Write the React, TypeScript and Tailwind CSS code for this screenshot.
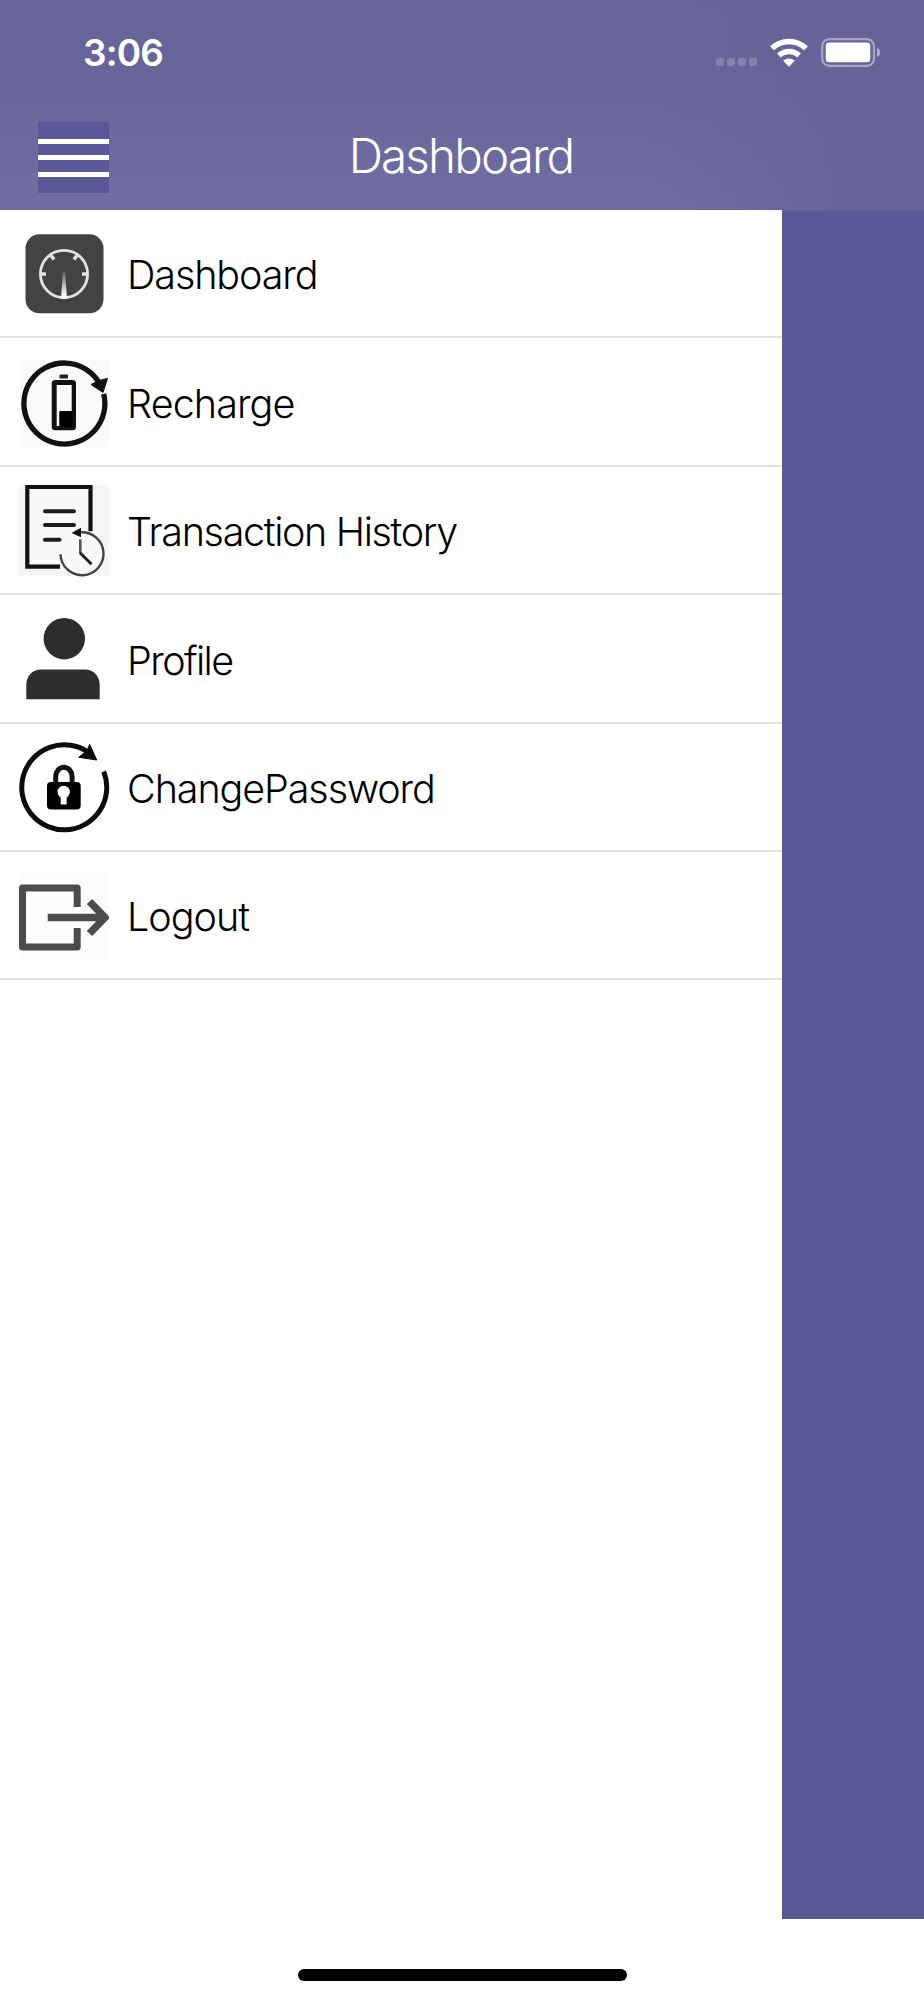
import React from 'react';

interface IconProps {
  className?: string;
}

const DashboardIcon: React.FC<IconProps> = ({ className }) => (
  <svg className={className} viewBox="0 0 90 90" fill="none">
    <defs>
      <linearGradient id="needle" x1="0" y1="41" x2="0" y2="66" gradientUnits="userSpaceOnUse">
        <stop stopColor="#fff" stopOpacity="0.1" />
        <stop offset="1" stopColor="#fff" />
      </linearGradient>
    </defs>
    <rect x="6.5" y="5.3" width="78" height="79" rx="14" fill="#434343" />
    <circle cx="45" cy="45" r="23.6" stroke="#e4e4e4" strokeWidth="2.8" />
    <path d="M22 45h5M63 45h5M32 26.5l3 4M58 26.5l-3 4" stroke="#e4e4e4" strokeWidth="3.5" />
    <path d="M44 43h2l2 26.5h-6z" fill="url(#needle)" />
  </svg>
);

const RechargeIcon: React.FC<IconProps> = ({ className }) => (
  <svg className={className} viewBox="0 1 90 90" fill="none">
    <rect x="1" y="2" width="89" height="88" fill="#fafafa" />
    <path d="M84.7 36.8A40.5 40.5 0 1 1 80 25.5" stroke="#111" strokeWidth="5.3" />
    <path d="M72 27.5l8-4 8.500-2-4.500 14z" fill="#111" stroke="#111" strokeWidth="1" />
    <rect x="40.5" y="17.5" width="8.5" height="4" rx="1" fill="#222" />
    <rect x="32.7" y="23" width="24.3" height="50.3" rx="3.5" fill="#111" />
    <path d="M37.7 28h15v26H40.8v15h-3.1z" fill="#fafafa" />
    <path d="M40.3 54.5h13V70h-13z" fill="#000" />
  </svg>
);

const HistoryIcon: React.FC<IconProps> = ({ className }) => (
  <svg className={className} viewBox="0 0.7 90 90" fill="none" overflow="visible">
    <rect y="-0.5" width="90" height="91" fill="#f5f5f5" />
    <path d="M41 81.4H8.3V1.7h63.2V46" fill="#f9f9f9" />
    <path d="M41 81.4H8.3V1.7h63.2V46" stroke="#111" strokeWidth="4.2" />
    <path d="M26 26h29M26 39.7h29M26 54.4h14.5" stroke="#1c1c1c" strokeWidth="4" strokeLinecap="round" />
    <circle cx="63" cy="68" r="21.5" fill="#f9f9f9" />
    <path d="M61 47A21.5 21.5 0 1 1 41.5 69" stroke="#444" strokeWidth="2.4" />
    <path d="M52.5 47.7l9.500-5.200v9.500z" fill="#111" />
    <path d="M61.3 54v14" stroke="#555" strokeWidth="2.6" />
    <path d="M61 67.5l11.500 11.500" stroke="#222" strokeWidth="3" />
  </svg>
);

const ProfileIcon: React.FC<IconProps> = ({ className }) => (
  <svg className={className} viewBox="0 0 90 90" fill="#2d2d2d">
    <circle cx="45.3" cy="24.7" r="20.7" />
    <path d="M7.3 85.300V71c0-9 6-15.500 14.700-15.500h44c8.700 0 14.700 6.500 14.700 15.500v14.300z" />
  </svg>
);

const PasswordIcon: React.FC<IconProps> = ({ className }) => (
  <svg className={className} viewBox="0.3 1 90 90" fill="none" overflow="visible">
    <path d="M85 29.5A42.5 42.5 0 1 1 69.5 10.2" stroke="#0b0b0b" strokeWidth="5" />
    <path d="M78 18L71 2.500 68 9 60 15.300z" fill="#0b0b0b" stroke="#0b0b0b" strokeWidth="1" />
    <path d="M37 42V34.5a8.200 9.200 0 0 1 16.400 0V42" stroke="#111" strokeWidth="5" />
    <rect x="28.3" y="40" width="33.7" height="27.5" rx="4" fill="#000" />
    <circle cx="45" cy="50" r="6.2" fill="#fff" />
    <path d="M42 52h6v10.500h-6z" fill="#fff" />
  </svg>
);

const LogoutIcon: React.FC<IconProps> = ({ className }) => (
  <svg className={className} viewBox="0 0.5 90 90" fill="none" stroke="#4a4c4e" strokeWidth="7">
    <rect x="0" y="1" width="90" height="88" fill="#fcfcfc" stroke="none" />
    <path d="M58.2 36.5V17.500H3.500v59h54.700V57.500" strokeLinejoin="round" />
    <path d="M28.7 47H84M70.500 31l15.500 16-15.500 16" strokeWidth="7.5" />
  </svg>
);

const WifiIcon: React.FC<IconProps> = ({ className }) => (
  <svg className={className} viewBox="0 0 38 29" fill="none" stroke="#fff" strokeWidth="5.6">
    <path d="M2 10.3a24.500 24.500 0 0 1 34 0" />
    <path d="M9 17.5a14.700 14.700 0 0 1 20 0" />
    <path d="M19 28.7l-5.800-5.900a8.500 8.500 0 0 1 11.600 0z" fill="#fff" stroke="none" />
  </svg>
);

const BatteryIcon: React.FC<IconProps> = ({ className }) => (
  <svg className={className} viewBox="0 0 60 29" fill="none">
    <rect x="1.2" y="1.2" width="51.8" height="26.6" rx="7" stroke="#fff" strokeOpacity="0.42" strokeWidth="2.2" />
    <rect x="4.7" y="4.5" width="44.6" height="19.8" rx="3.6" fill="#fff" />
    <path d="M56 10c4.300 1.500 4.300 7.500 0 9z" fill="#fff" fillOpacity="0.5" />
  </svg>
);

const menuItems = [
  { label: 'Dashboard', Icon: DashboardIcon, tracking: 'tracking-[-1.1px]' },
  { label: 'Recharge', Icon: RechargeIcon, tracking: 'tracking-[-0.9px]' },
  { label: 'Transaction History', Icon: HistoryIcon, tracking: 'tracking-[-1.35px]' },
  { label: 'Profile', Icon: ProfileIcon, tracking: 'tracking-[-1.6px]' },
  { label: 'ChangePassword', Icon: PasswordIcon, tracking: 'tracking-[-1.1px]' },
  { label: 'Logout', Icon: LogoutIcon, tracking: 'tracking-[-1px]' },
];

const StatusBar: React.FC = () => (
  <div className="flex h-[104px] items-center justify-between pr-[43px] pl-[83px]">
    <span className="text-[37px] leading-none font-semibold tracking-[-0.8px]">3:06</span>
    <div className="flex items-center">
      <div className="mr-[13px] flex gap-[3px] pt-5">
        {[0, 1, 2, 3].map((dot) => (
          <span key={dot} className="size-2 rounded-[2px] bg-white/20" />
        ))}
      </div>
      <WifiIcon className="mr-[13px] h-[29px] w-[38px]" />
      <BatteryIcon className="h-[29px] w-[60px]" />
    </div>
  </div>
);

const NavBar: React.FC = () => (
  <div className="grid h-[106px] grid-cols-[1fr_auto_1fr] items-center pr-[38px] pl-[38px]">
    <button aria-label="Menu" className="flex size-[71px] flex-col justify-center gap-[11.5px] bg-[#5b5897] pt-px">
      <span className="h-[5px] w-full bg-white" />
      <span className="h-[5px] w-full bg-white" />
      <span className="h-[5px] w-full bg-white" />
    </button>
    <h1 className="-ml-0.5 pb-[3px] text-[47.5px] leading-none font-light tracking-[-1.8px]">Dashboard</h1>
  </div>
);

const App: React.FC = () => {
  return (
    <div className="flex h-[2000px] w-[924px] flex-col overflow-hidden bg-white font-['Inter',sans-serif]">
      <header className="h-[210px] shrink-0 bg-[linear-gradient(to_right,transparent_70%,#656397_92%),linear-gradient(to_bottom,#666498_0%,#676599_42%,#706ea3_100%)] text-white">
        <StatusBar />
        <NavBar />
      </header>
      <main className="flex h-[1709px] shrink-0">
        <nav className="w-[782px] bg-white">
          {menuItems.map(({ label, Icon, tracking }) => (
            <button
              key={label}
              className="flex h-[128.4px] w-full items-center gap-[18px] border-b-2 border-[#dfdfdf] pt-[2px] pl-[19px] text-left text-black"
            >
              <Icon className="size-[90px] shrink-0" />
              <span className={`pt-[4px] text-[39.5px] leading-none font-light whitespace-nowrap ${tracking}`}>{label}</span>
            </button>
          ))}
        </nav>
        <div className="flex-1 border-t border-[#656398] bg-[#5b5897]" />
      </main>
      <footer className="flex flex-1 justify-center pt-[50px]">
        <div className="h-3 w-[329px] rounded-full bg-black" />
      </footer>
    </div>
  );
};

export default App;
